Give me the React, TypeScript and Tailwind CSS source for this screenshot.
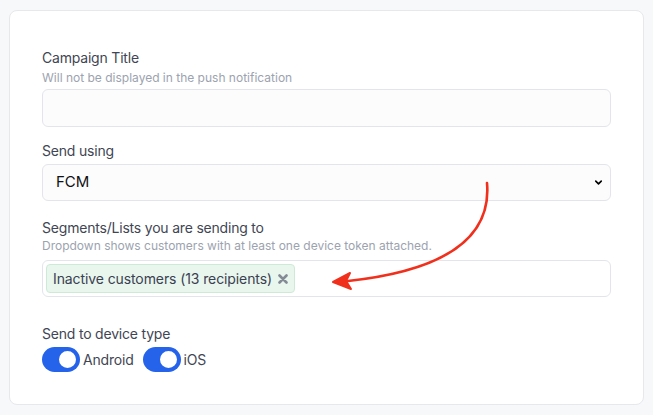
import { ChevronDown } from 'lucide-react';

function Toggle({ label }: { label: string }) {
  return (
    <label className="flex items-center gap-[3px]">
      <span className="relative flex h-[25px] w-[38px] items-center rounded-full bg-[#2563eb]">
        <span className="absolute right-[2px] h-[21px] w-[21px] rounded-full border-2 border-[#2563eb] bg-white" />
      </span>
      <span className="text-[14px] tracking-[-0.2px] text-[#3f4654]">{label}</span>
    </label>
  );
}

export default function App() {
  return (
    <div className="min-h-[415px] bg-[#f7f8fa] px-[9px] pt-[10px] pb-[11px] font-['Inter',sans-serif]">
      <div className="relative rounded-lg border border-[#e6e8ec] bg-white px-[32px] pt-[37px] pb-[32px]">
        {/* Campaign title */}
        <div className="text-[14px] leading-5 tracking-[-0.2px] text-[#3f4654]">Campaign Title</div>
        <div className="mt-[2px] text-[12px] leading-4 text-[#9ca3af]">Will not be displayed in the push notification</div>
        <input className="mt-[3px] block h-[38px] w-full rounded-md border border-[#e3e5ea] bg-[#fcfcfd]" />

        {/* Send using */}
        <div className="mt-[14px] text-[14px] leading-5 tracking-[-0.2px] text-[#3f4654]">Send using</div>
        <div className="relative mt-[3px]">
          <select className="block h-[37px] w-full appearance-none rounded-md border border-[#e3e5ea] bg-[#fcfcfd] pl-[13px] text-[15px] text-[#111]">
            <option>FCM</option>
          </select>
          <ChevronDown className="pointer-events-none absolute right-[7px] top-[13px] h-[11px] w-[11px] text-black" strokeWidth={3.5} />
        </div>

        {/* Segments */}
        <div className="mt-[17px] text-[14px] leading-5 tracking-[-0.2px] text-[#3f4654]">Segments/Lists you are sending to</div>
        <div className="text-[12px] leading-4 text-[#9ca3af]">Dropdown shows customers with at least one device token attached.</div>
        <div className="mt-[6px] flex h-[37px] w-full items-center rounded-md border border-[#e3e5ea] bg-white px-[3px]">
          <span className="flex h-[29px] items-center gap-[6px] rounded border border-[#cfe9d7] bg-[#e9f6ee] pl-[6px] pr-[6px] text-[14px] tracking-[-0.1px] text-[#3a4150]">
            Inactive customers (13 recipients)
            <svg width="10" height="10" viewBox="0 0 10 10">
              <path d="M1.5 1.5 L8.5 8.5 M8.5 1.5 L1.5 8.5" stroke="#858b95" strokeWidth="2.6" strokeLinecap="round" />
            </svg>
          </span>
        </div>

        {/* Device type */}
        <div className="mt-[27px] text-[14px] leading-5 tracking-[-0.2px] text-[#3f4654]">Send to device type</div>
        <div className="mt-[3px] flex items-center gap-[9px]">
          <Toggle label="Android" />
          <Toggle label="iOS" />
        </div>

        {/* annotation arrow */}
        <svg className="pointer-events-none absolute left-0 top-0" width="640" height="400" viewBox="0 0 640 400">
          <path d="M477 172 C 482 230, 430 260, 338 270" fill="none" stroke="#f0301c" strokeWidth="2.6" strokeLinecap="round" />
          <path d="M323 271 L340 262 L336 270 L341 278 Z" fill="#f0301c" stroke="#f0301c" strokeWidth="2" strokeLinejoin="round" />
        </svg>
      </div>
    </div>
  );
}
